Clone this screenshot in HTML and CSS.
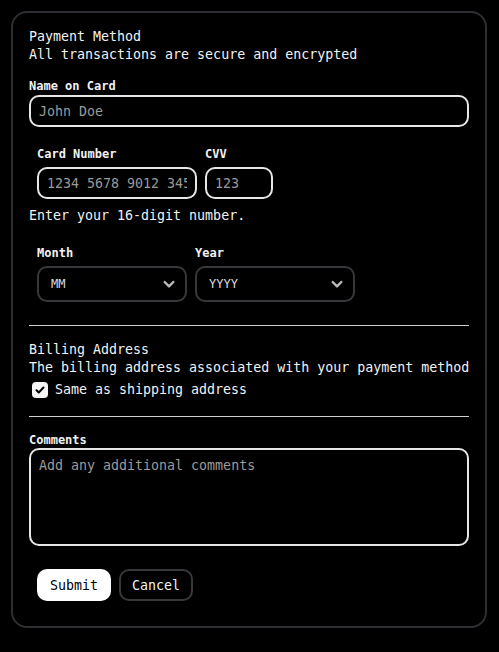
FILE: index.html
```html
<!DOCTYPE html>
<html lang="en">
<head>
    <meta charset="UTF-8">
    <title>Payment Form</title>
    <link rel="stylesheet" href="styles.css">
</head>
<body>

<form class="card">
    <div class="legend">Payment Method</div>
    <div class="desc">All transactions are secure and encrypted</div>

    <label class="label first">Name on Card</label>
    <input type="text" class="field wide" placeholder="John Doe">

    <div class="row indent top-gap">
        <div class="col">
            <label class="label">Card Number</label>
            <input type="text" class="field number" placeholder="1234 5678 9012 3456">
        </div>
        <div class="col">
            <label class="label">CVV</label>
            <input type="text" class="field cvv" placeholder="123">
        </div>
    </div>
    <div class="desc hint">Enter your 16-digit number.</div>

    <div class="row indent date-row">
        <div class="col">
            <label class="label">Month</label>
            <div class="select month">
                <span>MM</span>
                <svg width="16" height="16" viewBox="0 0 24 24" fill="none" stroke="currentColor" stroke-width="3.5" stroke-linecap="round" stroke-linejoin="round"><path d="M5.5 9l6.5 6.5 6.5-6.5"/></svg>
            </div>
        </div>
        <div class="col">
            <label class="label">Year</label>
            <div class="select year">
                <span>YYYY</span>
                <svg width="16" height="16" viewBox="0 0 24 24" fill="none" stroke="currentColor" stroke-width="3.5" stroke-linecap="round" stroke-linejoin="round"><path d="M5.5 9l6.5 6.5 6.5-6.5"/></svg>
            </div>
        </div>
    </div>

    <hr class="sep first-sep">

    <div class="legend">Billing Address</div>
    <div class="desc">The billing address associated with your payment method</div>
    <div class="check-row">
        <span class="checkbox">
            <svg width="12" height="12" viewBox="0 0 24 24" fill="none" stroke="#000" stroke-width="4" stroke-linecap="round" stroke-linejoin="round"><path d="M5 12.5l4.5 4.5L19 7"/></svg>
        </span>
        <span>Same as shipping address</span>
    </div>

    <hr class="sep second-sep">

    <label class="label comments">Comments</label>
    <textarea class="field area" placeholder="Add any additional comments"></textarea>

    <div class="actions">
        <button type="button" class="btn primary">Submit</button>
        <button type="button" class="btn outline">Cancel</button>
    </div>
</form>

</body>
</html>
```
FILE: styles.css
```css
body {
    margin: 0;
    padding: 11px;
    background: #000;
    color: #f2f2f2;
    font-family: "DejaVu Sans Mono", "Liberation Mono", monospace;
    font-size: 13.3px;
}
.card {
    width: 440px;
    height: 582px;
    border: 2px solid #2f2f33;
    border-radius: 16px;
    padding: 15px 16px 16px;
    display: flex;
    flex-direction: column;
}
.card > * {
    flex-shrink: 0;
}
.legend {
    line-height: 18px;
}
.desc {
    line-height: 18px;
    white-space: nowrap;
}
.label {
    display: block;
    font-weight: bold;
    font-size: 12px;
    line-height: 16px;
    margin-bottom: 5px;
}
.label.first {
    margin-top: 14px;
    margin-bottom: 1px;
}
.label.comments {
    margin-bottom: 0;
}
.field {
    box-sizing: border-box;
    background: #000;
    border: 2px solid #e6e6e6;
    border-radius: 10px;
    color: #f2f2f2;
    font-family: inherit;
    font-size: 13.3px;
    padding: 0 8px;
    height: 32px;
    outline: none;
}
.field::placeholder {
    color: #9a9a9a;
}
.wide {
    width: 440px;
}
.row {
    display: flex;
    gap: 8px;
}
.indent {
    padding-left: 8px;
}
.top-gap {
    margin-top: 19px;
}
.col {
    display: flex;
    flex-direction: column;
}
.number {
    width: 160px;
}
.cvv {
    width: 68px;
}
.hint {
    margin-top: 8px;
}
.date-row {
    margin-top: 20px;
}
.select {
    box-sizing: border-box;
    height: 36px;
    border: 2px solid #38383c;
    border-radius: 10px;
    display: flex;
    align-items: center;
    justify-content: space-between;
    padding: 0 8px 0 12px;
    font-size: 12px;
    color: #dcdcdc;
}
.select svg {
    color: #bdbdbd;
}
.month {
    width: 150px;
}
.year {
    width: 160px;
}
.sep {
    border: none;
    border-top: 1px solid #cfcfcf;
    margin: 0;
    width: 440px;
}
.first-sep {
    margin-top: 23px;
    margin-bottom: 15px;
}
.check-row {
    display: flex;
    align-items: center;
    gap: 7px;
    line-height: 18px;
    margin-top: 4px;
    padding-left: 3px;
}
.checkbox {
    width: 16px;
    height: 16px;
    border-radius: 4px;
    background: #f5f5f5;
    display: flex;
    align-items: center;
    justify-content: center;
}
.second-sep {
    margin-top: 17px;
    margin-bottom: 15px;
}
.area {
    width: 440px;
    height: 98px;
    resize: none;
    padding: 7px 8px;
    line-height: 18px;
}
.actions {
    display: flex;
    gap: 8px;
    padding-left: 8px;
    margin-top: 23px;
}
.btn {
    box-sizing: border-box;
    width: 74px;
    height: 32px;
    border-radius: 10px;
    font-family: inherit;
    font-size: 13.3px;
    cursor: pointer;
}
.primary {
    background: #fff;
    color: #000;
    border: none;
}
.outline {
    background: #000;
    color: #f2f2f2;
    border: 2px solid #38383c;
}
```
